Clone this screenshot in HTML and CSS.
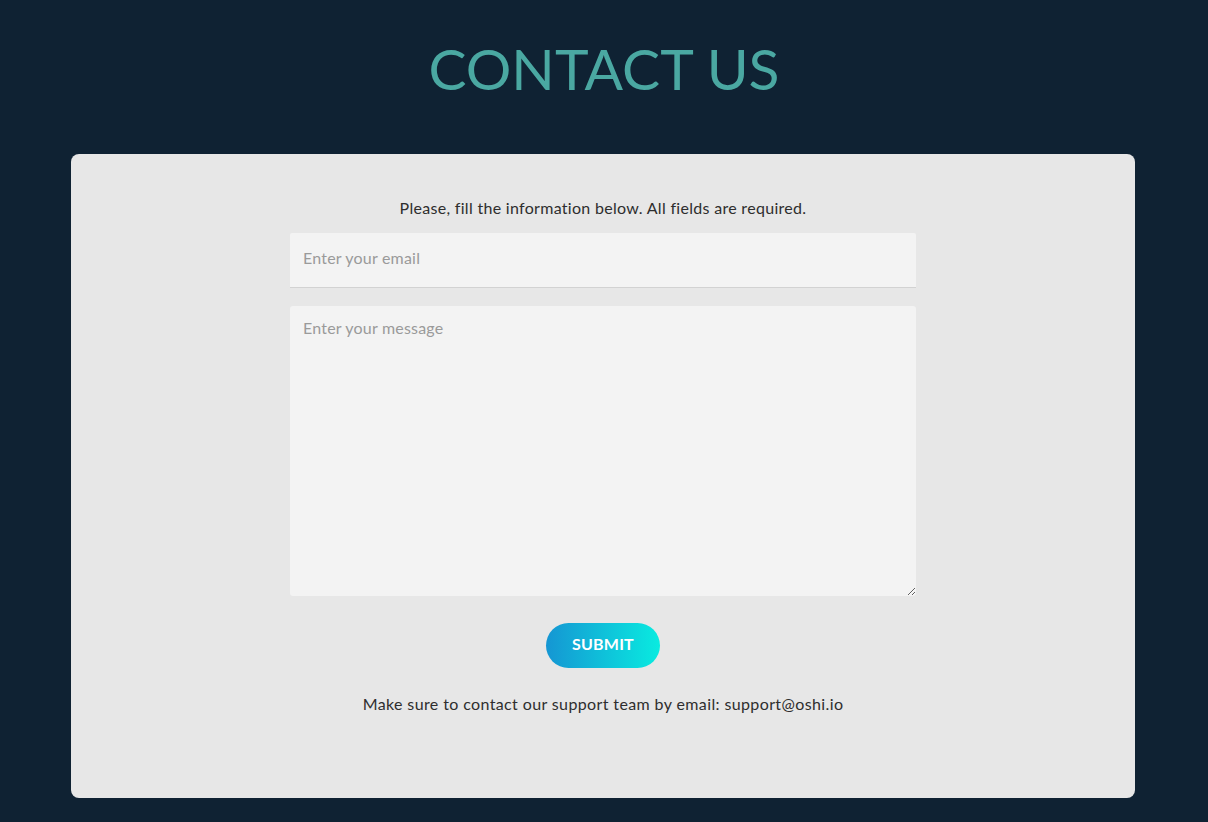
FILE: index.html
```html
<!DOCTYPE html>
<html>
<head>
<meta charset="utf-8">
<link rel="stylesheet" href="styles.css">
</head>
<body>
<header class="header">
  <h1 class="title">CONTACT US</h1>
</header>
<main class="card">
  <form class="form">
    <p class="intro">Please, fill the information below. All fields are required.</p>
    <input class="field email" type="text" placeholder="Enter your email" autofocus>
    <textarea class="field message" placeholder="Enter your message"></textarea>
    <button class="submit" type="button">SUBMIT</button>
    <p class="note">Make sure to contact our support team by email: support@oshi.io</p>
  </form>
</main>
</body>
</html>
```
FILE: styles.css
```css
html, body {
  margin: 0;
  padding: 0;
}
body {
  background: #0f2233;
  font-family: "Lato", "Open Sans", sans-serif;
  height: 822px;
  overflow: hidden;
}
.header {
  height: 154px;
  display: flex;
  justify-content: center;
  align-items: flex-start;
}
.title {
  margin: 32px 0 0;
  font-weight: 400;
  font-size: 57px;
  line-height: 72px;
  color: #4aa8a2;
}
.card {
  margin: 0 73px 0 71px;
  height: 644px;
  background: #e7e7e7;
  border-radius: 8px;
  box-sizing: border-box;
  padding-top: 43px;
}
.form {
  width: 626px;
  margin: 0 auto;
  display: flex;
  flex-direction: column;
  align-items: center;
}
.intro {
  margin: 0 0 14px;
  font-size: 16px;
  line-height: 22px;
  color: #2e2e2e;
  letter-spacing: 0.3px;
}
.field {
  width: 100%;
  box-sizing: border-box;
  background: #f3f3f3;
  border: none;
  font-family: "Lato", "Open Sans", sans-serif;
  font-size: 16px;
  letter-spacing: 0.2px;
  color: #333;
  padding: 0 13px;
  outline: none;
}
.field::placeholder {
  color: #9a9a9a;
}
.email {
  height: 55px;
  padding-bottom: 6px;
  border-bottom: 1px solid #d2d2d2;
  border-radius: 2px 2px 0 0;
}
.message {
  margin-top: 18px;
  height: 290px;
  border-radius: 3px;
  padding-top: 12px;
  resize: vertical;
}
.submit {
  margin-top: 27px;
  width: 114px;
  height: 45px;
  padding: 0 0 4px;
  border: none;
  border-radius: 23px;
  background: linear-gradient(90deg, #1596d3 0%, #09ebe0 100%);
  color: #fff;
  font-family: "Lato", "Open Sans", sans-serif;
  font-weight: 700;
  font-size: 16px;
  letter-spacing: 0.2px;
  cursor: pointer;
}
.note {
  margin: 25px 0 0;
  font-size: 16px;
  line-height: 22px;
  color: #2e2e2e;
  letter-spacing: 0.38px;
}
```
